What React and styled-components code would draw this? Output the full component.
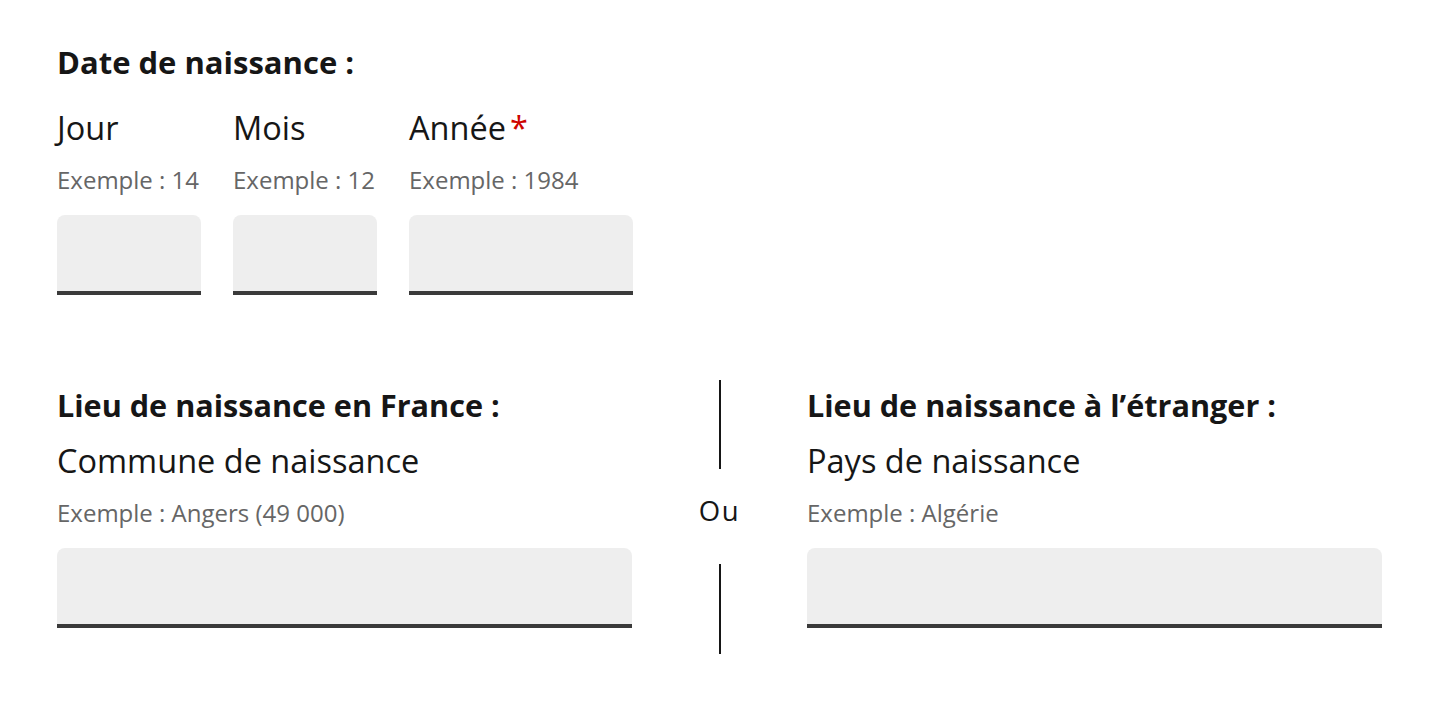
import styled, { createGlobalStyle } from "styled-components"

const GlobalStyle = createGlobalStyle`
    html, body {
        margin: 0;
        padding: 0;
        background: #ffffff;
    }
    body {
        font-family: "Open Sans", "Noto Sans", sans-serif;
        color: #161616;
    }
`

const Page = styled.div`
    padding: 44px 57px;
    display: flex;
    flex-direction: column;
`

const Legend = styled.p`
    margin: 0;
    font-weight: 700;
    font-size: ${props => props.$size || 31}px;
    line-height: ${props => props.$lh || 36}px;
    color: #161616;
`

const DateRow = styled.div`
    display: flex;
    gap: 32px;
    margin-top: 28px;
`

const Field = styled.div`
    display: flex;
    flex-direction: column;
    width: ${props => props.$width}px;
`

const Label = styled.label`
    font-size: 32.5px;
    line-height: 40px;
    white-space: nowrap;
    color: #161616;

    span {
        color: #ce0500;
        margin-left: 4px;
    }
`

const Hint = styled.span`
    margin-top: 18px;
    font-size: 24px;
    line-height: 28px;
    color: #666666;
    white-space: nowrap;
`

const Input = styled.div`
    margin-top: 21px;
    box-sizing: border-box;
    height: 80px;
    background: #eeeeee;
    border-radius: 8px 8px 0 0;
    border-bottom: 4px solid #3a3a3a;
`

const PlaceGrid = styled.div`
    display: grid;
    grid-template-columns: 575px 175px 575px;
    margin-top: 85px;
`

const PlaceColumn = styled.div`
    padding-top: 5px;
    display: flex;
    flex-direction: column;

    ${Label} {
        margin-top: 16px;
    }
`

const Divider = styled.div`
    display: flex;
    flex-direction: column;
    align-items: center;
`

const Line = styled.div`
    width: 2px;
    height: ${props => props.$height}px;
    background: #161616;
`

const Or = styled.span`
    margin: 26px 0 37px;
    font-size: 27.5px;
    line-height: 32px;
    letter-spacing: 1.5px;
    color: #161616;
`

const App = () => {
    return (
        <Page>
            <GlobalStyle />
            <Legend>Date de naissance :</Legend>
            <DateRow>
                <Field $width={144}>
                    <Label>Jour</Label>
                    <Hint>Exemple : 14</Hint>
                    <Input />
                </Field>
                <Field $width={144}>
                    <Label>Mois</Label>
                    <Hint>Exemple : 12</Hint>
                    <Input />
                </Field>
                <Field $width={224}>
                    <Label>Année<span>*</span></Label>
                    <Hint>Exemple : 1984</Hint>
                    <Input />
                </Field>
            </DateRow>

            <PlaceGrid>
                <PlaceColumn>
                    <Legend $size={30.6} $lh={40}>Lieu de naissance en France :</Legend>
                    <Label>Commune de naissance</Label>
                    <Hint>Exemple : Angers (49 000)</Hint>
                    <Input />
                </PlaceColumn>
                <Divider>
                    <Line $height={89} />
                    <Or>Ou</Or>
                    <Line $height={90} />
                </Divider>
                <PlaceColumn>
                    <Legend $size={30.6} $lh={40}>Lieu de naissance à l’étranger :</Legend>
                    <Label>Pays de naissance</Label>
                    <Hint>Exemple : Algérie</Hint>
                    <Input />
                </PlaceColumn>
            </PlaceGrid>
        </Page>
    )
}

export default App
